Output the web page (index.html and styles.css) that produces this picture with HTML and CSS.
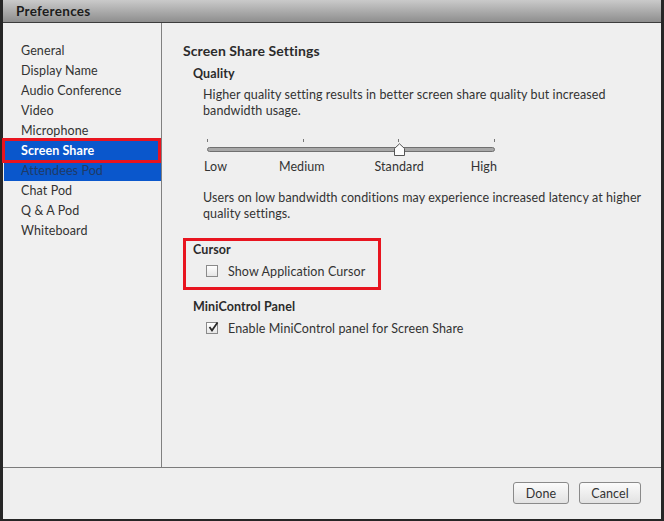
FILE: index.html
```html
<!DOCTYPE html>
<html>
  <head>
    <title>Preferences</title>
    <meta name="viewport" content="width=device-width, initial-scale=1">
    <link rel="stylesheet" href="styles.css">
  </head>
  <body>
    <div class="window">
      <div class="titlebar">Preferences</div>
      <div class="main">
        <ul class="nav">
          <li>General</li>
          <li>Display Name</li>
          <li>Audio Conference</li>
          <li>Video</li>
          <li>Microphone</li>
          <li class="selected">Screen Share</li>
          <li class="hilite">Attendees Pod</li>
          <li>Chat Pod</li>
          <li>Q &amp; A Pod</li>
          <li>Whiteboard</li>
        </ul>
        <div class="content">
          <h2>Screen Share Settings</h2>
          <div class="group">
            <h3>Quality</h3>
            <p class="desc">Higher quality setting results in better screen share quality but increased bandwidth usage.</p>
            <div class="slider">
              <div class="ticks"><i></i><i></i><i></i><i></i></div>
              <div class="track">
                <svg class="thumb" width="13" height="13" viewBox="0 0 13 13">
                  <path d="M1.5 12.5 L1.5 5.5 L6.5 0.8 L11.5 5.5 L11.5 12.5 Z" fill="#fdfdfd" stroke="#555" stroke-width="1"/>
                </svg>
              </div>
              <div class="labels">
                <span class="first">Low</span>
                <span>Medium</span>
                <span>Standard</span>
                <span class="last">High</span>
              </div>
            </div>
            <p class="desc desc2">Users on low bandwidth conditions may experience increased latency at higher quality settings.</p>
          </div>
          <div class="group marked">
            <h3>Cursor</h3>
            <label class="check"><span class="box"></span>Show Application Cursor</label>
          </div>
          <div class="group">
            <h3>MiniControl Panel</h3>
            <label class="check"><span class="box">
              <svg width="12" height="12" viewBox="0 0 12 12"><path d="M2.5 6 L5 9.5 L10.5 1.5" fill="none" stroke="#2a2a2a" stroke-width="1.8"/></svg>
            </span>Enable MiniControl panel for Screen Share</label>
          </div>
        </div>
      </div>
      <div class="footer">
        <button class="done">Done</button>
        <button class="cancel">Cancel</button>
      </div>
    </div>
  </body>
</html>
```
FILE: styles.css
```css
body {
  margin: 0;
  background-color: #262626;
  font-family: Lato, "Liberation Sans", sans-serif;
  font-size: 12.5px;
  letter-spacing: 0.1px;
  color: #333;
}
.window {
  margin-left: 3px;
  width: 658px;
  height: 519px;
  background-color: #efefef;
  display: flex;
  flex-direction: column;
}
.titlebar {
  height: 22px;
  line-height: 23px;
  padding-left: 13px;
  font-size: 13.5px;
  letter-spacing: 0.3px;
  font-weight: bold;
  color: #1c1c1c;
  background: linear-gradient(#cacaca, #8e8e8e);
  border-bottom: 1px solid #3c3c3c;
}
.main {
  display: flex;
  height: 444px;
  border-bottom: 1px solid #7b7b7b;
}
.nav {
  list-style: none;
  margin: 0;
  padding: 18px 0 0 1px;
  width: 157px;
  border-right: 1px solid #808080;
  background-color: #f0f0f0;
}
.nav li {
  height: 20px;
  line-height: 20px;
  padding-left: 17px;
}
.nav li.selected {
  position: relative;
  background-color: #0a57cc;
  color: #fff;
  font-weight: bold;
}
.nav li.selected::after {
  content: "";
  position: absolute;
  left: -2px;
  top: -3px;
  right: 0;
  bottom: -2px;
  border: 3px solid #e8141f;
}
.nav li.hilite {
  background-color: #0a57cc;
  color: #1f3a66;
}
.content {
  flex: 1;
  padding: 19px 0 0 21px;
}
h2 {
  margin: 0 0 5px;
  font-size: 14px;
  font-weight: bold;
  color: #2b2b2b;
  line-height: 18px;
}
h3 {
  margin: 0;
  font-size: 12.5px;
  font-weight: bold;
  color: #2b2b2b;
  line-height: 18px;
}
.group {
  padding-left: 10px;
}
.desc {
  margin: 4px 0 0 10px;
  line-height: 16px;
  width: 445px;
}
.slider {
  margin: 20px 0 0 14px;
  width: 288px;
}
.ticks {
  display: flex;
  justify-content: space-between;
  height: 3px;
}
.ticks i {
  width: 1px;
  background-color: #777;
}
.track {
  position: relative;
  margin-top: 5px;
  height: 3px;
  border: 1px solid #707070;
  border-radius: 3px;
  background-color: #a8a8a8;
}
.thumb {
  position: absolute;
  left: 185px;
  top: -5px;
}
.labels {
  display: flex;
  justify-content: space-between;
  margin-top: 7px;
  height: 16px;
  line-height: 16px;
}
.labels span {
  width: 1px;
  display: flex;
  justify-content: center;
  white-space: nowrap;
}
.labels span.first {
  justify-content: flex-start;
  margin-left: -3px;
}
.labels span.last {
  justify-content: flex-end;
  margin-right: -2px;
}
.desc2 {
  margin-top: 15px;
}
.marked {
  margin-top: 16px;
  width: 185px;
  height: 46px;
  padding-left: 7px;
  border: 3px solid #e8141f;
}
.marked + .group {
  margin-top: 8px;
}
.check {
  display: flex;
  align-items: center;
  margin: 3px 0 0 13px;
  height: 18px;
}
.box {
  width: 12px;
  height: 12px;
  border: 1px solid #8a8a8a;
  background: linear-gradient(#ffffff, #e6e6e6);
  margin-right: 10px;
  box-sizing: border-box;
  display: flex;
  align-items: center;
  justify-content: center;
}
.box svg {
  flex: none;
  margin-top: -2px;
  margin-left: 1px;
}
.footer {
  display: flex;
  justify-content: flex-end;
  gap: 10px;
  padding: 14px 20px 0 0;
}
button {
  height: 22px;
  font-family: Lato, "Liberation Sans", sans-serif;
  font-size: 12.5px;
  letter-spacing: 0.1px;
  color: #333;
  border: 1px solid #8a8a8a;
  border-radius: 3px;
  background: linear-gradient(#fbfbfb, #e2e2e2);
  padding: 0;
}
.done {
  width: 56px;
}
.cancel {
  width: 62px;
}
```
